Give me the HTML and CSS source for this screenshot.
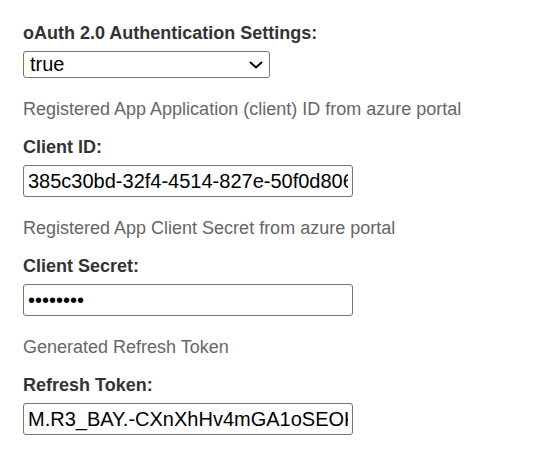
FILE: index.html
```html
<!DOCTYPE html>
<html>
<head>
<meta charset="utf-8">
<link rel="stylesheet" href="styles.css">
</head>
<body>
<form class="settings">
  <div class="field">
    <label class="label">oAuth 2.0 Authentication Settings:</label>
    <div class="select-box">
      <span class="select-value">true</span>
      <svg class="chevron" width="14" height="8" viewBox="0 0 14 8"><path d="M1 1 L7 6.5 L13 1" fill="none" stroke="#000" stroke-width="2"/></svg>
    </div>
  </div>
  <p class="hint">Registered App Application (client) ID from azure portal</p>
  <div class="field">
    <label class="label">Client ID:</label>
    <input class="text-input" type="text" value="385c30bd-32f4-4514-827e-50f0d806c1a2">
  </div>
  <p class="hint">Registered App Client Secret from azure portal</p>
  <div class="field">
    <label class="label">Client Secret:</label>
    <input class="text-input secret" type="password" value="12345678">
  </div>
  <p class="hint">Generated Refresh Token</p>
  <div class="field">
    <label class="label">Refresh Token:</label>
    <input class="text-input" type="text" value="M.R3_BAY.-CXnXhHv4mGA1oSEOKqz">
  </div>
</form>
</body>
</html>
```
FILE: styles.css
```css
html, body {
  margin: 0;
  padding: 0;
  background: #fff;
}
body {
  font-family: "Liberation Sans", Arial, sans-serif;
}
.settings {
  padding: 23px 0 0 23px;
  display: flex;
  flex-direction: column;
}
.field {
  display: flex;
  flex-direction: column;
  align-items: flex-start;
}
.label {
  font-size: 18px;
  font-weight: bold;
  color: #333;
  line-height: 20px;
  margin-bottom: 8px;
}
.hint {
  font-size: 18px;
  color: #666;
  margin: 21px 0 18px;
  line-height: 20px;
}
.select-box {
  box-sizing: border-box;
  width: 247px;
  height: 27px;
  border: 1px solid #767676;
  border-radius: 3px;
  display: flex;
  align-items: center;
  justify-content: space-between;
  padding: 0 6px 0 6px;
}
.select-value {
  font-size: 20px;
  color: #000;
}
.chevron {
  display: block;
}
.text-input {
  box-sizing: border-box;
  width: 330px;
  height: 32px;
  border: 1px solid #767676;
  border-radius: 3px;
  padding: 0 4px;
  font-family: "Liberation Sans", Arial, sans-serif;
  font-size: 20px;
  color: #000;
  margin: 0;
}
```
